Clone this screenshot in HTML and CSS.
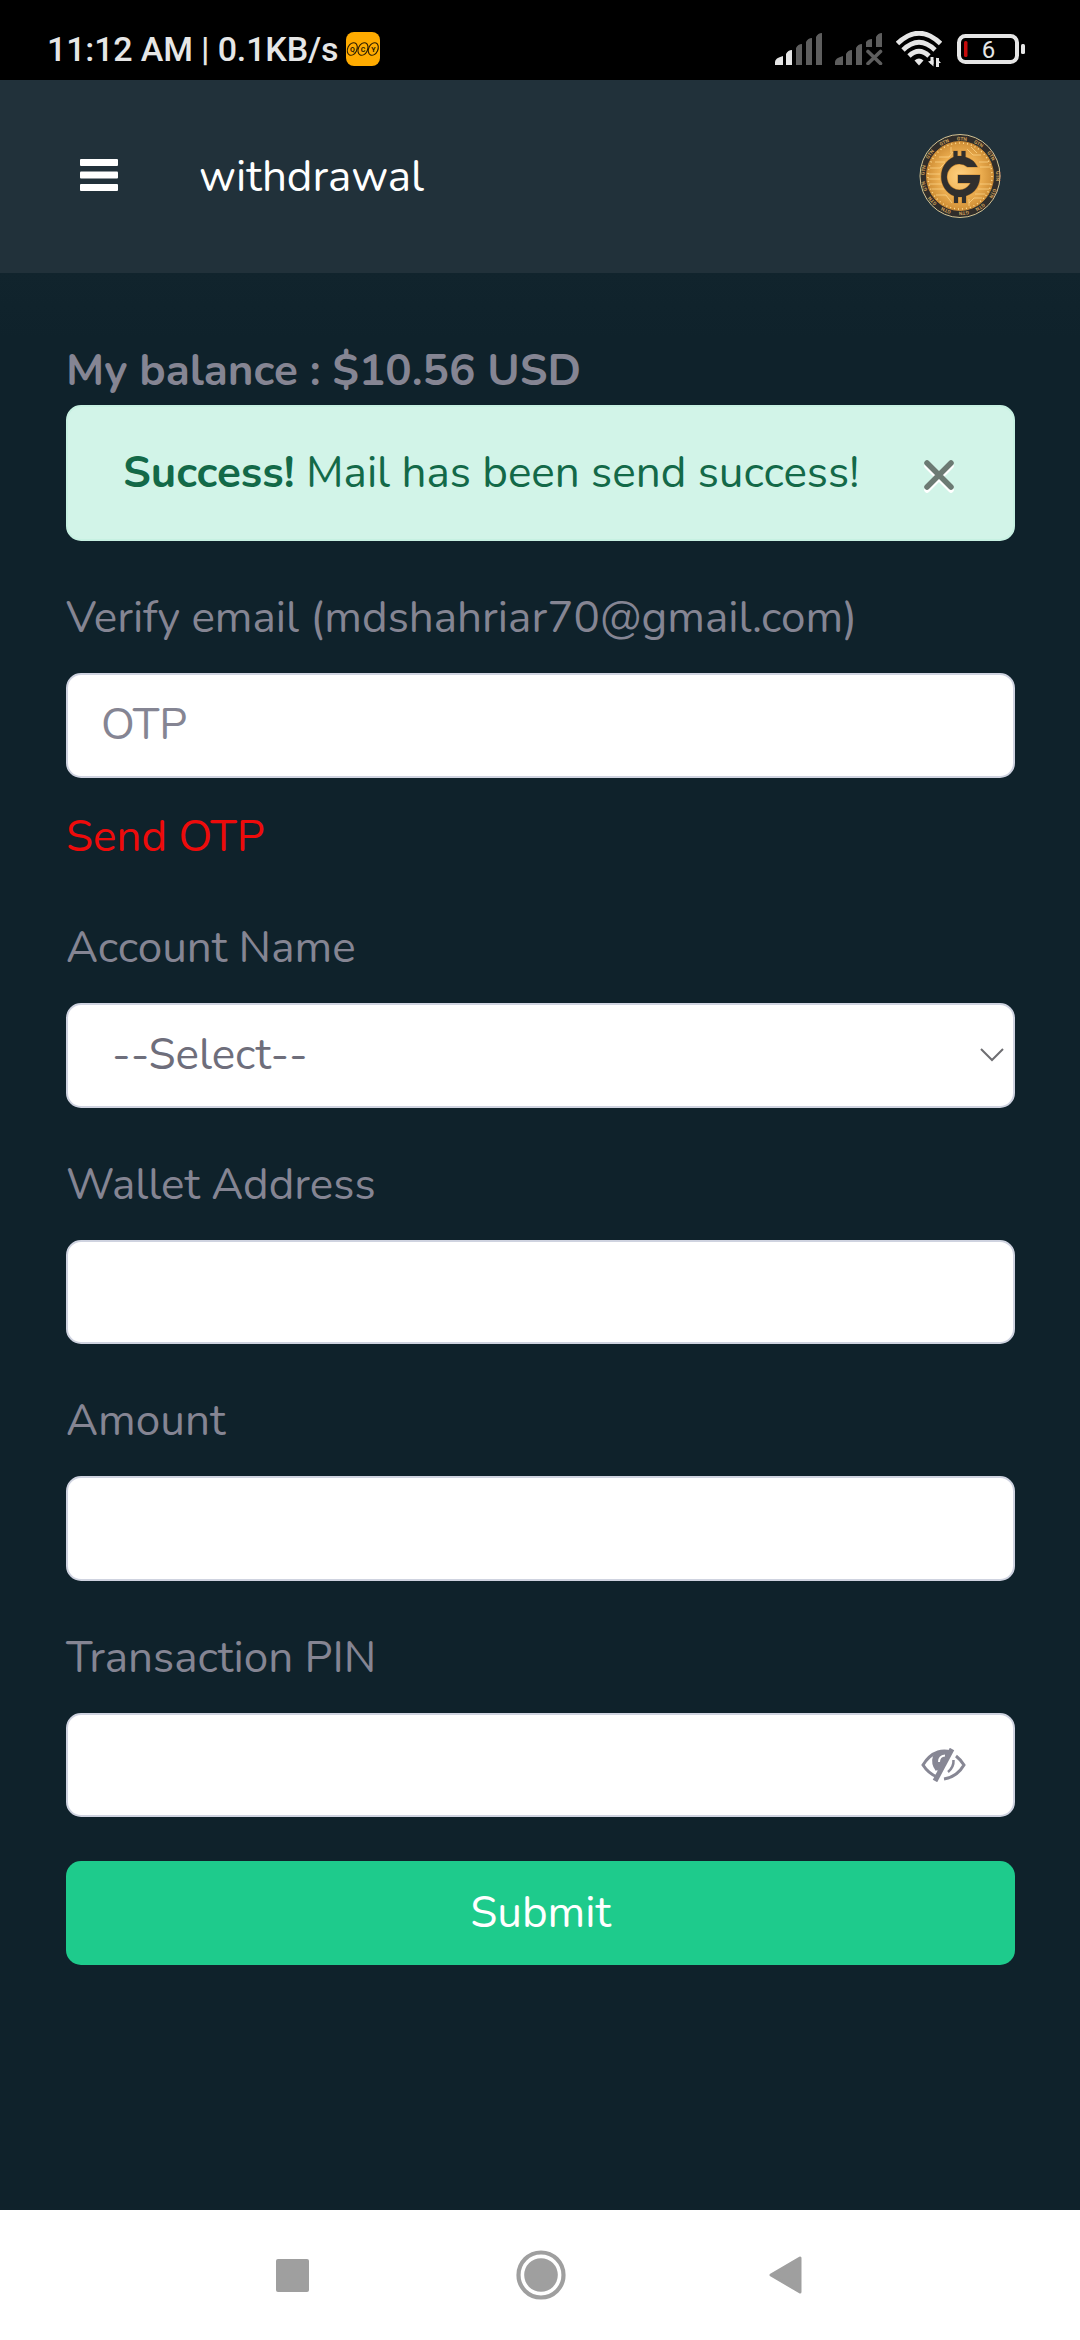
FILE: index.html
```html
<!DOCTYPE html>
<html lang="en">
<head>
<meta charset="utf-8">
<title>withdrawal</title>
<link rel="stylesheet" href="styles.css">
</head>
<body>
<div class="status-bar">
  <span class="status-text">11:12 AM | 0.1KB/s</span>
  <svg class="app-badge" viewBox="0 0 34 34" width="34" height="34">
    <rect width="34" height="34" rx="8" fill="#ffab00"/>
    <g fill="none" stroke="#2b1c00" stroke-width="1.1">
      <ellipse cx="6.3" cy="17" rx="4.6" ry="6.6" transform="rotate(25 6.3 17)"/>
      <ellipse cx="17" cy="17" rx="4.6" ry="6.6" transform="rotate(25 17 17)"/>
      <ellipse cx="27.3" cy="17" rx="4.6" ry="6.6" transform="rotate(25 27.3 17)"/>
    </g>
    <g class="badge-letters"><text x="6.5" y="19.500">Q</text><text x="17" y="19.500">C</text><text x="27.3" y="19.500">Y</text></g>
  </svg>
  <div class="status-icons">
    <svg viewBox="0 0 48 32" width="48" height="32">
      <path d="M0 32v-3q0-4 8-6v9z M11 32V21q2-4 6-4v15z" fill="#e6e6e6"/>
      <path d="M21 32V15q2-4 6-4v21z M31 32V9q2-4 6-4v27z M41 32V4q2-4 6-4v32z" fill="#5e5e5e"/>
    </svg>
    <svg viewBox="0 0 48 32" width="48" height="32" fill="#5e5e5e">
      <path d="M0 32v-3q0-4 8-6v9z M11 32V21q2-4 6-4v15z M21 32V15q2-4 6-4v21z M31 14V9q2-3 6-3v8z M41 14V4q2-4 6-4v14z"/>
      <path d="M33 18.500L45.500 30.500M45.500 18.500L33 30.500" stroke="#5e5e5e" stroke-width="3.600" stroke-linecap="round"/>
    </svg>
    <svg class="wifi" viewBox="0 0 46 36" width="46" height="36" fill="none" stroke="#e6e6e6" stroke-width="4.800">
      <path d="M1.500 12.500Q23-8 44.500 12.500M7 19Q23 3.500 39 19M13 25Q23 15.500 33 25"/>
      <path d="M23 34.500l-4.500-5q4.500-4 9 0z" fill="#e6e6e6" stroke="none"/>
      <path d="M36 26v7M41.500 36v-9" stroke-width="3"/>
      <path d="M32 30.500l5.500 5V29zM45 32l-5-5.500V32z" fill="#e6e6e6" stroke="none"/>
    </svg>
    <svg class="battery" viewBox="0 0 68 30" width="68" height="30">
      <rect x="2" y="2" width="58" height="26" rx="6.500" fill="none" stroke="#e6e6e6" stroke-width="4"/>
      <rect x="64" y="10" width="4" height="10" rx="1.500" fill="#e6e6e6"/>
      <rect x="7" y="7" width="3.500" height="16" rx="1.500" fill="#c40a0a"/>
      <text class="battery-level" x="31.500" y="24">6</text>
    </svg>
  </div>
</div>

<header class="app-header">
  <svg class="menu" viewBox="0 0 38 32" width="38" height="32" fill="#fff">
    <rect width="38" height="7" rx="1"/><rect y="12.500" width="38" height="7" rx="1"/><rect y="25" width="38" height="7" rx="1"/>
  </svg>
  <h1 class="title">withdrawal</h1>
  <svg class="coin" viewBox="0 0 82 84" width="82" height="84">
    <defs>
      <radialGradient id="gold"><stop offset="0" stop-color="#ffd080"/><stop offset=".6" stop-color="#eeb052"/><stop offset="1" stop-color="#cf8e35"/></radialGradient>
    </defs>
    <ellipse cx="41" cy="42" rx="40" ry="41.500" fill="#302d2a" stroke="#d3c394" stroke-width="1"/>
    <ellipse cx="41" cy="42" rx="33.500" ry="34.500" fill="url(#gold)" stroke="#c98a36" stroke-width="1"/>
    <g fill="none" stroke="#ffd98d" stroke-width=".7">
      <path d="M11 34h10l5-5M9 40h12M9 45h12M10 50h14M13 55h14l5 5M17 61h10l6 8M20 23h10l4-5M16 28h10M48 15l6 6h8M52 13l6 6M60 28h9M61 33h11M61 50h11M59 55h11M56 60h10M50 69l5-5h8M32 13v6M50 65v7"/>
      <ellipse cx="41" cy="42" rx="32" ry="33" stroke-dasharray="1 3" stroke-width="1.500"/>
    </g>
    <path id="mark" d="M34.500 17h4v5h4v-5h4v6q8 2 12 10h-10a12.500 13 0 1 0 3 16H39v-8h22q0 16-14 21v7h-4v-6h-4v6h-4v-7a20 21 0 0 1-.5-39z" fill="#302f2e" stroke="#c98a36" stroke-width="1.200" paint-order="stroke"/>
    <g class="coin-text">
      <text transform="translate(41 42) rotate(3) translate(0 -35.500)">GTN</text>
      <text transform="translate(41 42) rotate(30) translate(0 -35.500)">GTN</text>
      <text transform="translate(41 42) rotate(57) translate(0 -35.500)">GTN</text>
      <text transform="translate(41 42) rotate(90) translate(0 -35.500)">GTN</text>
      <text transform="translate(41 42) rotate(118) translate(0 -35.500)">GTN</text>
      <text transform="translate(41 42) rotate(147) translate(0 -35.500)">GTN</text>
      <text transform="translate(41 42) rotate(174) translate(0 -35.500)">GTN</text>
      <text transform="translate(41 42) rotate(202) translate(0 -35.500)">GTN</text>
      <text transform="translate(41 42) rotate(228) translate(0 -35.500)">GTN</text>
      <text transform="translate(41 42) rotate(254) translate(0 -35.500)">GTN</text>
      <text transform="translate(41 42) rotate(279) translate(0 -35.500)">GTN</text>
      <text transform="translate(41 42) rotate(306) translate(0 -35.500)">GTN</text>
      <text transform="translate(41 42) rotate(335) translate(0 -35.500)">GTN</text>
    </g>
  </svg>
</header>

<main class="content">
  <p class="balance">My balance : $10.56 USD</p>
  <div class="alert">
    <span><strong>Success!</strong> Mail has been send success!</span>
    <svg class="close" viewBox="0 0 30 34" width="30" height="34" fill="none" stroke-width="5.500" stroke-linecap="round">
      <path d="M3 6L27 30M27 6L3 30" stroke="#fff"/>
      <path d="M3 3L27 27M27 3L3 27" stroke="#6c7a73"/>
    </svg>
  </div>
  <form class="form">
    <label class="label">Verify email (mdshahriar70@gmail.com)</label>
    <div class="field"><span>OTP</span></div>
    <a class="send-otp">Send OTP</a>
    <label class="label">Account Name</label>
    <div class="field select"><span>--Select--</span>
      <svg viewBox="0 0 24 14" width="24" height="14" fill="none" stroke="#6e6e72" stroke-width="2"><path d="M1 1l11 11L23 1"/></svg>
    </div>
    <label class="label">Wallet Address</label>
    <div class="field"></div>
    <label class="label">Amount</label>
    <div class="field"></div>
    <label class="label">Transaction PIN</label>
    <div class="field pin">
      <svg viewBox="0 0 45 34" width="45" height="34" fill="none" stroke="#878794" stroke-width="3">
        <path d="M30 4Q23 2 17 4Q8 7 2 17Q7 25 16 29M35 8Q40 12 43 17Q36 29 23 31"/>
        <path d="M13 7Q10 17 17 23L28 4Q20 1 13 7z" fill="#878794" stroke="none"/>
        <path d="M13.500 8Q11 16 16 22"/>
        <path d="M18 14Q18 8 24 7.500" stroke="#fff" stroke-width="2"/>
        <path d="M32.500 12Q33 19 27 24" stroke-width="2.500"/>
        <path d="M14 33L31 1" stroke-width="5"/>
      </svg>
    </div>
    <button class="submit" type="button">Submit</button>
  </form>
</main>

<nav class="nav-bar">
  <svg viewBox="0 0 33 33" width="33" height="33"><rect width="33" height="33" rx="2" fill="#9f9f9f"/></svg>
  <svg viewBox="0 0 50 50" width="50" height="50"><circle cx="25" cy="25" r="22.500" fill="none" stroke="#9f9f9f" stroke-width="4.200"/><circle cx="25" cy="25" r="16.800" fill="#9f9f9f"/></svg>
  <svg class="back" viewBox="0 0 33 38" width="33" height="38"><path d="M2 19L31 2v34z" fill="#9f9f9f" stroke="#9f9f9f" stroke-width="3" stroke-linejoin="round"/></svg>
</nav>
</body>
</html>
```
FILE: styles.css
```css
* { box-sizing: border-box; }
body {
  margin: 0;
  width: 1080px;
  height: 2340px;
  display: flex;
  flex-direction: column;
  background: #0f222b;
  color: #858593;
  font-family: Nunito, Lato, sans-serif;
  font-size: 44px;
  line-height: 66px;
  overflow: hidden;
}
svg { display: block; flex: none; }

.status-bar {
  height: 80px;
  padding: 18px 55px 0 47px;
  display: flex;
  align-items: center;
  background: #000;
  color: #e6e6e6;
}
.status-text { font: 500 34px/40px Roboto, sans-serif; letter-spacing: -.15px; }
.app-badge { margin-left: 8px; }
.badge-letters text { font: bold 7px Roboto, sans-serif; fill: #2b1c00; text-anchor: middle; }
.status-icons { margin-left: auto; display: flex; align-items: center; gap: 12px; }
.wifi { margin-left: 1px; }
.battery { margin: 0 0 1px 3px; }
.battery-level { font: 24px Roboto, sans-serif; fill: #e6e6e6; text-anchor: middle; }

.app-header {
  height: 193px;
  padding: 0 79px 0 80px;
  display: flex;
  align-items: center;
  background: #21313a;
}
.menu { margin-bottom: 3px; }
.title { margin: 0 auto 0 81px; font-size: 44px; font-weight: 400; color: #fff; }
.coin { margin-bottom: 1px; }
.coin-text text { font: bold 5px Roboto, sans-serif; fill: #c99d58; text-anchor: middle; }

.content {
  flex: 1;
  padding: 65px 65px 0 66px;
  background: linear-gradient(#11242d, #0f222b 65px);
}
.balance { margin: 0 0 1px; font-weight: 700; }
.alert {
  height: 136px;
  padding: 0 59px 0 55px;
  display: flex;
  align-items: center;
  justify-content: space-between;
  background: #d2f4e8;
  border: 2px solid #c7f1e2;
  border-radius: 15px;
  color: #136948;
}
.close { margin-top: 7px; }

.form { display: flex; flex-direction: column; padding-top: 44px; }
.label { margin-bottom: 22px; }
.field {
  height: 104.5px;
  margin-bottom: 44px;
  padding: 0 33px;
  display: flex;
  align-items: center;
  background: #fff;
  border: 2px solid #cfd3e0;
  border-radius: 15px;
}
.send-otp { color: #ee0b0b; margin: -17.5px 0 45px; }
.select { padding: 0 9px 0 44px; justify-content: space-between; color: #6e6e7b; }
.pin { justify-content: flex-end; padding-right: 47px; }
.submit {
  height: 103.5px;
  padding: 0;
  border: 0;
  border-radius: 15px;
  background: #1ecb8c;
  color: #fff;
  font: inherit;
}

.nav-bar {
  height: 130px;
  padding-left: 275.5px;
  display: flex;
  align-items: center;
  gap: 207.5px;
  background: #fff;
}
.back { margin-left: -5px; }
```
